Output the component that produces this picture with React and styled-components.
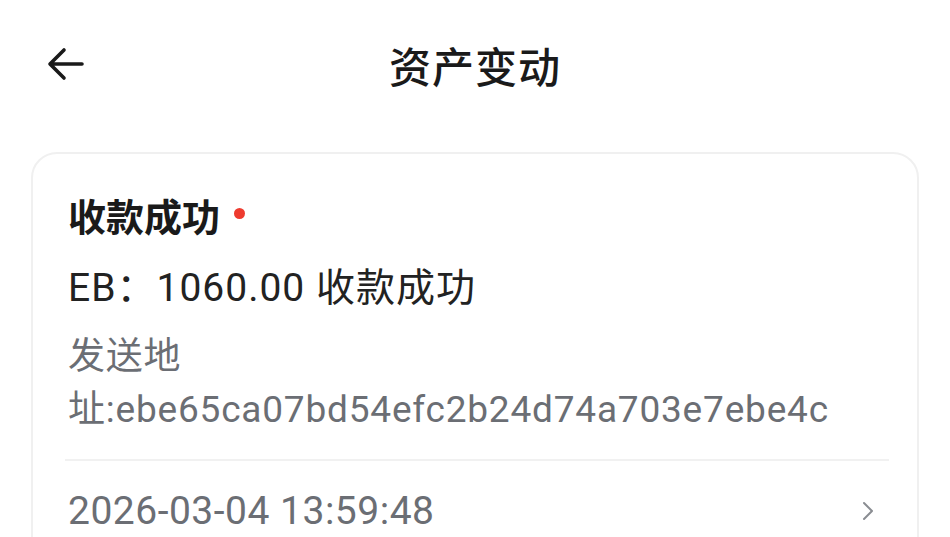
import React from 'react';
import styled, { createGlobalStyle } from 'styled-components';

const GlobalStyle = createGlobalStyle`
  html, body {
    margin: 0;
    padding: 0;
    background: #ffffff;
  }
  body {
    font-family: Roboto, "Noto Sans CJK SC", sans-serif;
    color: #1f1f1f;
  }
`;

const Page = styled.div`
  width: 950px;
  min-height: 537px;
  background: #fff;
  overflow: hidden;
`;

const Header = styled.header`
  position: relative;
  height: 128px;
  display: flex;
  align-items: center;
  justify-content: center;
`;

const BackButton = styled.button`
  position: absolute;
  left: 44px;
  top: 42px;
  width: 44px;
  height: 44px;
  padding: 0;
  border: 0;
  background: none;
  display: flex;
  align-items: center;
  justify-content: center;
  cursor: pointer;
`;

const Title = styled.h1`
  margin: 0;
  font-size: 42px;
  font-weight: 500;
  color: #1a1a1a;
  letter-spacing: 1px;
`;

const Card = styled.section`
  margin: 24px 31px 0;
  border: 2px solid #f0f0f0;
  border-radius: 26px;
  padding: 34px 28px 0 35px;
  background: #fff;
`;

const StatusRow = styled.div`
  display: flex;
  align-items: center;
  height: 52px;
`;

const StatusText = styled.span`
  font-size: 38px;
  font-weight: 700;
  color: #1a1a1a;
`;

const Dot = styled.span`
  width: 11px;
  height: 11px;
  border-radius: 50%;
  background: #ee3b2f;
  margin-left: 14px;
  margin-bottom: 2px;
`;

const Amount = styled.div`
  margin-top: 22px;
  font-size: 39px;
  line-height: 52px;
  letter-spacing: 1px;
  color: #222;
`;

const Address = styled.div`
  margin-top: 16px;
  font-size: 37px;
  line-height: 53px;
  letter-spacing: 0.8px;
  color: #6b6e74;
  padding-right: 20px;
`;

const Divider = styled.hr`
  margin: 23px 0 0 -3px;
  border: 0;
  height: 2px;
  background: #f1f1f1;
`;

const DateRow = styled.div`
  height: 100px;
  display: flex;
  align-items: center;
  justify-content: space-between;
  padding-right: 14px;
`;

const DateText = styled.span`
  font-size: 39px;
  letter-spacing: 0.5px;
  color: #6b6e74;
`;

const Chevron = () => (
  <svg width="14" height="22" viewBox="0 0 14 22" fill="none">
    <path d="M3 3l8 8-8 8" stroke="#8a8d92" strokeWidth="2" strokeLinecap="round" strokeLinejoin="round" />
  </svg>
);

const BackArrow = () => (
  <svg width="40" height="34" viewBox="0 0 40 34" fill="none">
    <path d="M36 17H5M18 3L4 17l14 14" stroke="#1a1a1a" strokeWidth="3.6" strokeLinecap="round" strokeLinejoin="round" />
  </svg>
);

export default function App() {
  return (
    <Page>
      <GlobalStyle />
      <Header>
        <BackButton aria-label="返回">
          <BackArrow />
        </BackButton>
        <Title>资产变动</Title>
      </Header>
      <Card>
        <StatusRow>
          <StatusText>收款成功</StatusText>
          <Dot />
        </StatusRow>
        <Amount>EB：1060.00 收款成功</Amount>
        <Address>发送地址:ebe65ca07bd54efc2b24d74a703e7ebe4c</Address>
        <Divider />
        <DateRow>
          <DateText>2026-03-04 13:59:48</DateText>
          <Chevron />
        </DateRow>
      </Card>
    </Page>
  );
}
